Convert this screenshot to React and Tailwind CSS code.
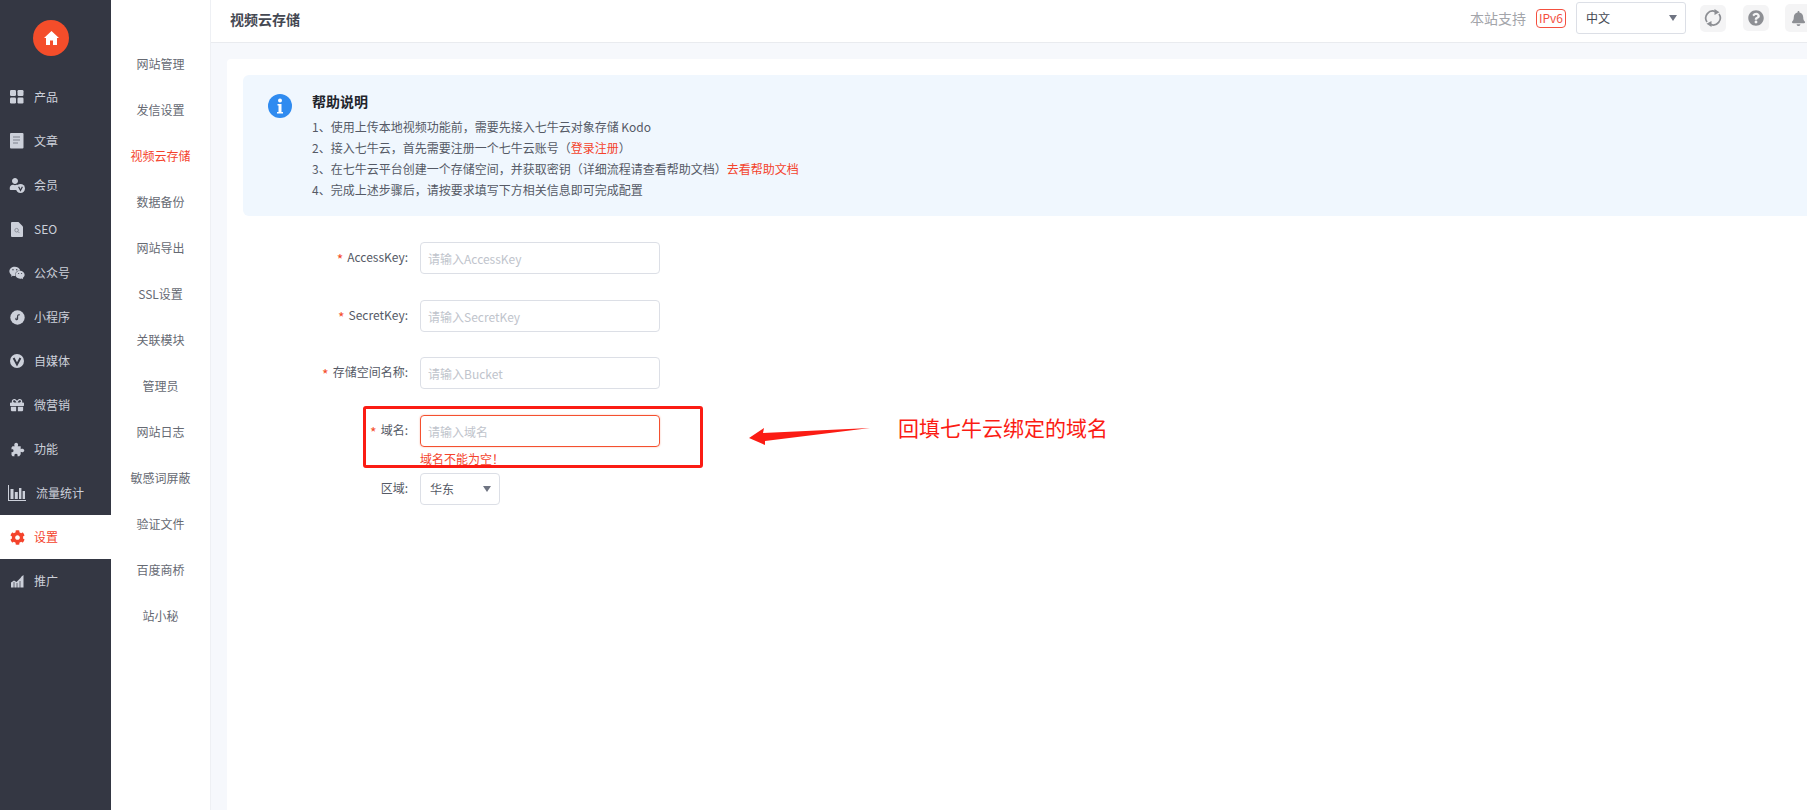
import { FaWeixin, FaGift, FaCog, FaQuestionCircle, FaBell, FaUser } from "react-icons/fa";

const font = { fontFamily: '"Noto Sans CJK SC", "Noto Sans", sans-serif' };

function HomeIcon() {
  return (
    <svg width="15" height="14" viewBox="0 0 15 14" fill="currentColor">
      <path d="M7.5 0L15 7h-2v7H9V9.5H6V14H2V7H0z" />
    </svg>
  );
}

function RefreshIcon() {
  return (
    <svg width="18" height="18" viewBox="0 0 18 18" fill="none" stroke="currentColor" strokeWidth="1.7">
      <path d="M3 13A7 7 0 0 1 11.5 2.6" />
      <path d="M15 5A7 7 0 0 1 6.5 15.4" />
      <path d="M10.5 0l5 3.2-5 2.8z" fill="currentColor" stroke="none" />
      <path d="M7.5 18l-5-3.2 5-2.8z" fill="currentColor" stroke="none" />
    </svg>
  );
}

function PuzzleIcon() {
  return (
    <svg width="15" height="15" viewBox="0 0 15 15" fill="currentColor">
      <path d="M2.5 4.2h2.2C4 3.2 4 1 6.2 0.8 8.4 1 8.4 3.2 7.7 4.2h3v3c1-.7 3.4-.7 3.6 1.3-.2 2-2.6 2-3.6 1.3v2.4l-1.4 2H7.4c.7-1-.1-2.4-1.4-2.4s-2.1 1.4-1.4 2.4H2.5l-1-1.2V10c.8.5 2 .2 2-1.2s-1.2-1.8-2-1.2V5.4z" />
    </svg>
  );
}

function GridIcon() {
  return (
    <svg width="14" height="14" viewBox="0 0 14 14" fill="currentColor">
      <rect x="0" y="0" width="6" height="6" rx="1.2" />
      <rect x="7.5" y="0" width="6" height="6" rx="1.2" />
      <rect x="0" y="7.5" width="6" height="6" rx="1.2" />
      <rect x="7.5" y="7.5" width="6" height="6" rx="1.2" />
    </svg>
  );
}

function DocIcon() {
  return (
    <svg width="14" height="16" viewBox="0 0 14 16">
      <rect width="13.5" height="15.5" rx="1" fill="currentColor" />
      <path d="M3 4h7M3 7h7M3 10h5" stroke="#7c808c" strokeWidth="1" />
    </svg>
  );
}

function MemberIcon() {
  return (
    <span className="relative block w-[16px] h-[15px]">
      <FaUser size={12} />
      <svg className="absolute right-0 bottom-0" width="9" height="9" viewBox="0 0 9 9">
        <circle cx="4.5" cy="4.5" r="4.5" fill="currentColor" />
        <path d="M2.6 2.8l1.9 3.6 1.9-3.6" fill="none" stroke="#343743" strokeWidth="1.2" />
      </svg>
    </span>
  );
}

function SeoIcon() {
  return (
    <svg width="12" height="15" viewBox="0 0 12 15">
      <path d="M0 1a1 1 0 011-1h6.5L12 4.5V14a1 1 0 01-1 1H1a1 1 0 01-1-1z" fill="currentColor" />
      <circle cx="5.6" cy="8.2" r="1.8" fill="none" stroke="#7c808c" strokeWidth="0.8" />
      <path d="M7 9.6l1.5 1.5" stroke="#7c808c" strokeWidth="0.8" />
    </svg>
  );
}

function MiniAppIcon() {
  return (
    <svg width="15" height="15" viewBox="0 0 15 15">
      <circle cx="7.5" cy="7.5" r="7.2" fill="currentColor" />
      <path d="M9.8 4.9c-1.3-.5-2.2.4-2.2 1.4v2.4c0 .8-.9 1.3-1.5.8-.6-.5-.2-1.4.5-1.5" fill="none" stroke="#343743" strokeWidth="1.1" />
    </svg>
  );
}

function VIcon() {
  return (
    <svg width="14" height="14" viewBox="0 0 14 14">
      <circle cx="7" cy="7" r="7" fill="currentColor" />
      <path d="M3.6 4l3.4 6.4L10.4 4" fill="none" stroke="#343743" strokeWidth="2" />
    </svg>
  );
}

function BarsIcon() {
  return (
    <svg width="18" height="16" viewBox="0 0 18 16" fill="currentColor">
      <path d="M0 0h1v15h17v1H0z" />
      <rect x="2.5" y="4" width="3" height="10" />
      <rect x="6.8" y="7" width="3" height="7" />
      <rect x="11" y="3" width="2.4" height="11" />
      <rect x="14.6" y="6" width="2.4" height="8" />
    </svg>
  );
}

function TrendIcon() {
  return (
    <svg width="13" height="13" viewBox="0 0 13 13" fill="currentColor">
      <path d="M0 7.5l3-2 2.5 1.5L9.5 3l1-1.5L12.5 0v12.5H0z" />
      <path d="M3 7v6M6 8v5M9 6v7" stroke="#343743" strokeWidth="0.7" />
    </svg>
  );
}

const mainNav = [
  { label: "产品", icon: <GridIcon /> },
  { label: "文章", icon: <DocIcon /> },
  { label: "会员", icon: <MemberIcon /> },
  { label: "SEO", icon: <SeoIcon /> },
  { label: "公众号", icon: <FaWeixin size={16} /> },
  { label: "小程序", icon: <MiniAppIcon /> },
  { label: "自媒体", icon: <VIcon /> },
  { label: "微营销", icon: <FaGift size={14} /> },
  { label: "功能", icon: <PuzzleIcon /> },
  { label: "流量统计", icon: <BarsIcon />, shift: true },
  { label: "设置", icon: <FaCog size={15} />, active: true },
  { label: "推广", icon: <TrendIcon /> },
];

const subNav = ["网站管理", "发信设置", "视频云存储", "数据备份", "网站导出", "SSL设置", "关联模块", "管理员", "网站日志", "敏感词屏蔽", "验证文件", "百度商桥", "站小秘"];

function Caret() {
  return <span className="w-0 h-0 border-x-[4.5px] border-x-transparent border-t-[6px] border-t-[#6f7482]" />;
}

function Field({ label, placeholder, error, tight }) {
  return (
    <div className={error ? "flex items-center" : tight ? "flex items-center mb-[25px]" : "flex items-center mb-[26px]"}>
      <label className="w-[165px] text-right text-xs text-[#555a66] mr-[12px] -mt-[2px]">
        <span className="inline-block translate-y-[3px] text-[14px] leading-none text-[#f44d2a] mr-[4px]">*</span>
        {label}:
      </label>
      <input
        placeholder={placeholder}
        className={
          error
            ? "w-[240px] h-8 px-[7px] rounded-[4px] border border-[#f4502f] shadow-[0_0_2px_#f9b8a8] text-xs placeholder:text-[#c0c4cc] outline-none"
            : "w-[240px] h-8 px-[7px] rounded-[4px] border border-[#dcdfe6] text-xs placeholder:text-[#c0c4cc] outline-none"
        }
      />
    </div>
  );
}

export default function App() {
  return (
    <div className="relative flex h-screen w-full overflow-hidden bg-white" style={font}>
      <aside className="w-[111px] shrink-0 bg-[#343743] text-[#ccd0da]">
        <div className="h-[75px] flex items-center pl-[33px]">
          <div className="w-9 h-9 rounded-full bg-[#f44d2a] flex items-center justify-center text-white">
            <HomeIcon />
          </div>
        </div>
        {mainNav.map((item) => (
          <div
            key={item.label}
            className={item.active ? "h-11 flex items-center bg-white text-[#f4432c]" : "h-11 flex items-center"}
          >
            <span className="w-[34px] flex justify-center">{item.icon}</span>
            <span className={item.shift ? "text-xs ml-[2px]" : "text-xs"}>{item.label}</span>
          </div>
        ))}
      </aside>

      <nav className="w-[100px] shrink-0 pt-[41px] border-r border-[#eef0f4] bg-white">
        {subNav.map((name) => (
          <div
            key={name}
            className={name === "视频云存储" ? "h-[46px] flex items-center justify-center text-xs text-[#f4432c]" : "h-[46px] flex items-center justify-center text-xs text-[#666a73]"}
          >
            {name}
          </div>
        ))}
      </nav>

      <main className="flex-1 min-w-0 flex flex-col bg-[#f6f8fc]">
        <header className="h-[43px] shrink-0 flex items-center bg-white border-b border-[#e9ebef] pl-[19px]">
          <h1 className="text-sm font-bold text-[#444852] -mt-[4px]">视频云存储</h1>
          <div className="ml-auto flex items-center -mt-[6px] -mr-[12px]">
            <span className="text-[14px] text-[#a3a5aa]">本站支持</span>
            <span className="ml-[10px] w-[30px] h-[19px] flex items-center justify-center rounded-[4px] border border-[#f4503f] text-xs text-[#f4503f]">IPv6</span>
            <div className="ml-[10px] w-[110px] h-8 flex items-center justify-between pl-[9px] pr-[8px] rounded-[3px] border border-[#dcdfe6] text-xs text-[#444852]">
              中文
              <Caret />
            </div>
            <div className="ml-[14px] w-[26px] h-[27px] rounded-[5px] bg-[#f4f4f5] flex items-center justify-center text-[#8d8f94]">
              <RefreshIcon />
            </div>
            <div className="ml-[17px] w-[26px] h-[26px] rounded-[5px] bg-[#f4f4f5] flex items-center justify-center text-[#8d8f94]">
              <FaQuestionCircle size={16} />
            </div>
            <div className="ml-[16px] w-[34px] h-[28px] rounded-[5px] bg-[#f4f4f5] flex items-center pl-[6px] text-[#8d8f94]">
              <FaBell size={15} />
            </div>
          </div>
        </header>

        <section className="flex-1 ml-[16px] mt-[16px] bg-white rounded-tl-[4px] pl-[16px] pt-[16px]">
          <div className="h-[141px] flex bg-[#f0f7fe] rounded-l-[6px] pl-[25px] pt-[19px]">
            <svg width="24" height="24" viewBox="0 0 24 24">
              <circle cx="12" cy="12" r="12" fill="#2f8bf0" />
              <circle cx="12" cy="6.5" r="2" fill="#fff" />
              <path d="M9.5 10h4v8h1.5v1.5H9V18h1.5v-6.5h-1z" fill="#fff" />
            </svg>
            <div className="ml-[20px] -mt-[3px]">
              <h2 className="text-sm font-bold text-[#22252c] leading-[21px] mb-[4px]">帮助说明</h2>
              <div className="text-xs leading-[21px] text-[#555a66]">
                <p>1、使用上传本地视频功能前，需要先接入七牛云对象存储 Kodo</p>
                <p>2、接入七牛云，首先需要注册一个七牛云账号（<span className="text-[#f4432c]">登录注册</span>）</p>
                <p>3、在七牛云平台创建一个存储空间，并获取密钥（详细流程请查看帮助文档）<span className="text-[#f4432c]">去看帮助文档</span></p>
                <p>4、完成上述步骤后，请按要求填写下方相关信息即可完成配置</p>
              </div>
            </div>
          </div>

          <form className="mt-[26px]">
            <Field label="AccessKey" placeholder="请输入AccessKey" />
            <Field label="SecretKey" placeholder="请输入SecretKey" tight />
            <Field label="存储空间名称" placeholder="请输入Bucket" />
            <Field label="域名" placeholder="请输入域名" error />
            <div className="h-[26px] pl-[177px] text-xs leading-[24px] text-[#f4432c]">域名不能为空！</div>
            <div className="flex items-center">
              <label className="w-[165px] mr-[12px] text-right text-xs text-[#555a66] -mt-[2px]">区域:</label>
              <div className="w-[80px] h-8 flex items-center justify-between pl-[9px] pr-[8px] rounded-[4px] border border-[#dcdfe6] text-xs text-[#555a66]">
                华东
                <Caret />
              </div>
            </div>
          </form>
        </section>
      </main>

      {/* annotation drawn over the screenshot */}
      <div className="absolute left-[363px] top-[406px] w-[340px] h-[62px] border-[3px] border-[#fb1c14] rounded-[3px]" />
      <svg className="absolute left-[745px] top-[424px]" width="130" height="26" viewBox="745 424 130 26">
        <polygon points="749,438 764,428 763,433 870,428 765,441 765,445" fill="#fb1c14" />
      </svg>
      <div className="absolute left-[898px] top-[412px] text-[21px] leading-[30px] text-[#fb1c14] whitespace-nowrap">回填七牛云绑定的域名</div>
    </div>
  );
}
